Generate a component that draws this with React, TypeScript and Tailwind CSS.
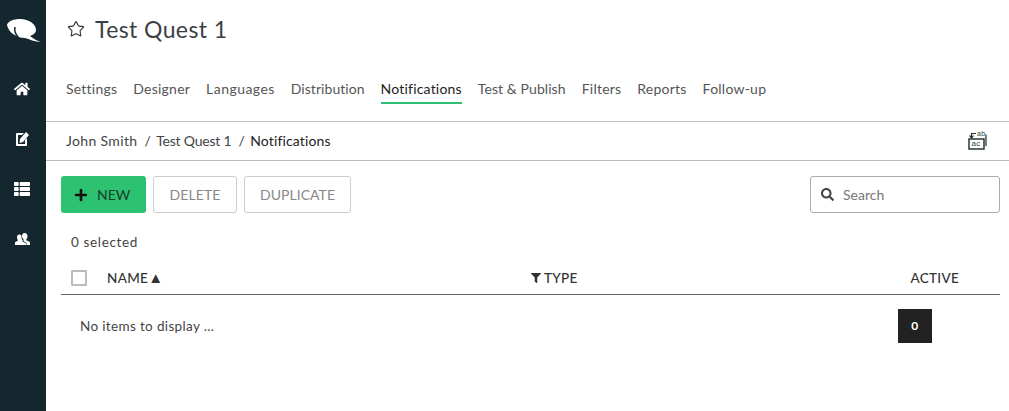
import { FaFilter, FaHome, FaPlus, FaSearch, FaThList } from 'react-icons/fa';
import { Star } from 'lucide-react';

const tabs = [
  { label: 'Settings', cls: '' },
  { label: 'Designer', cls: '' },
  { label: 'Languages', cls: 'tracking-[0.45px]' },
  { label: 'Distribution', cls: 'tracking-[0.05px]' },
  { label: 'Notifications', cls: 'h-[26px] border-b-2 border-[#2dbf73] tracking-[0.2px] text-[#222]' },
  { label: 'Test & Publish', cls: 'tracking-[0.08px]' },
  { label: 'Filters', cls: '' },
  { label: 'Reports', cls: '' },
  { label: 'Follow-up', cls: '' },
];

function Logo() {
  return (
    <svg width="38" height="27" viewBox="5 17 38 27" className="block">
      <path d="M7 25C8 21 14 19 20 19C29 19 36 24 36 30C36 33 33 35 30 36C33 38 37 41 41 42C35 42 29 39 25 38C20 38 17 37 15 35C12 34 8 30 7 25Z" fill="#fff" />
      <path d="M15 27C14 31 15 34 19 38" fill="none" stroke="#14262e" strokeWidth="1.500" />
    </svg>
  );
}

function EditIcon() {
  return (
    <svg width="14" height="16" viewBox="0 0 14 16" className="block">
      <path d="M2 2h7l-2 2H3v9h7V9l2-2v7a1 1 0 0 1-1 1H2a1 1 0 0 1-1-1V3a1 1 0 0 1 1-1z" fill="#fff" />
      <path d="M11 1l3 3-6 7-3.500 1L5 8z" fill="#fff" />
    </svg>
  );
}

function UsersIcon() {
  return (
    <svg width="15" height="14" viewBox="0 0 15 14" className="block">
      <path d="M9.500 1c2 0 3 1.500 3 3.300 0 1.200-.5 2.300-1.200 3v1l3.700 1.700V13h-3.500v-2L8.500 9V7.300C7.800 6.600 7 5.500 7 4.300 7 2.500 7.800 1 9.500 1z" fill="#fff" />
      <path d="M4.500 2.500c1.700 0 2 1 2 2.500 0 1.200 .3 2.300 1 3v1.500l3.500 1.700V13H0v-2.800l3-1.700V8c-.7-.7-1-1.800-1-3 0-1.500 .8-2.500 2.500-2.500z" fill="#fff" />
    </svg>
  );
}

function SwapIcon() {
  return (
    <svg width="22" height="22" viewBox="0 0 22 22" className="block">
      <text x="10" y="6.500" fontSize="7" fill="#2a3a44" fontFamily="Liberation Sans, sans-serif">ab</text>
      <text x="4.500" y="17" fontSize="8" fill="#2a3a44" fontFamily="Liberation Sans, sans-serif">ac</text>
      <rect x="2" y="10" width="15" height="10" fill="none" stroke="#1c2a22" strokeWidth="1.400" />
      <path d="M19 5.500V17M9 4.500H4.500V9M2.500 6.500l2 2.500 2-2.500" fill="none" stroke="#1c2a22" strokeWidth="1.200" />
    </svg>
  );
}

export default function App() {
  return (
    <div className="flex h-[411px] w-[1009px] overflow-hidden bg-white font-['Lato',sans-serif] text-[#333]">
      {/* Sidebar */}
      <aside className="flex w-[46px] shrink-0 flex-col items-center bg-[#14262e] text-white">
        <div className="mt-[17px] h-[27px] pl-[2px]"><Logo /></div>
        <nav className="mt-5 flex flex-col items-center pr-[2px]">
          <span className="flex h-[50px] items-center"><FaHome size={16} /></span>
          <span className="flex h-[50px] items-center"><EditIcon /></span>
          <span className="flex h-[50px] items-center"><FaThList size={16} /></span>
          <span className="flex h-[50px] items-center"><UsersIcon /></span>
        </nav>
      </aside>

      <main className="min-w-0 flex-1">
        {/* Title */}
        <div className="flex h-[60px] items-center pl-[21px]">
          <Star size={18} strokeWidth={1.500} className="mb-[2px] text-[#333]" />
          <h1 className="mb-[2px] ml-[10px] text-[23px] tracking-[0.4px] text-[#3a3f44]">Test Quest 1</h1>
        </div>

        {/* Tabs */}
        <div className="flex h-[62px] gap-4 border-b border-[#bbb] pl-5 pt-[18px] text-[14px] tracking-[0.23px] text-[#555]">
          {tabs.map((t) => (
            <span key={t.label} className={t.cls}>{t.label}</span>
          ))}
        </div>

        {/* Breadcrumb */}
        <div className="flex h-[39px] items-center justify-between border-b border-[#bbb] pl-5 pr-5 text-[14px] tracking-[0.35px]">
          <div className="mb-[2px] flex items-center text-[#444]">
            <span>John Smith</span>
            <span className="ml-[7px] mr-[5px]">/</span>
            <span className="tracking-[-0.2px]">Test Quest 1</span>
            <span className="ml-[7px] mr-[5px]">/</span>
            <span className="tracking-[0.15px] text-[#222]">Notifications</span>
          </div>
          <div className="mb-[3px]"><SwapIcon /></div>
        </div>

        {/* Toolbar */}
        <div className="flex items-center pl-[15px] pr-[9px] pt-[15px]">
          <button className="flex h-[37px] w-[85px] items-center gap-[9px] rounded-[3px] bg-[#2cc272] pl-[13px] text-[14px] text-[#14402a]">
            <FaPlus size={14} className="text-[#111]" />
            NEW
          </button>
          <button className="ml-[7px] h-[37px] w-[84px] rounded-[3px] border border-[#ccc] text-[14px] tracking-[0.1px] text-[#888]">DELETE</button>
          <button className="ml-[7px] h-[37px] w-[107px] rounded-[3px] border border-[#ccc] text-[14px] tracking-[0.05px] text-[#888]">DUPLICATE</button>
          <div className="ml-auto flex h-[37px] w-[190px] items-center rounded-[3px] border border-[#aaa] pl-[10px] text-[14px] text-[#777]">
            <FaSearch size={13} className="text-[#444]" />
            <span className="ml-[9px]">Search</span>
          </div>
        </div>

        <div className="pl-[25px] pt-[20px] text-[13.500px] leading-[18px] tracking-[0.65px] text-[#444]">0 selected</div>

        {/* Table */}
        <div className="mx-[15px] mr-[9px] mt-[12px]">
          <div className="flex h-[32px] items-center border-b border-[#666] pb-[1px] text-[13.500px] font-medium tracking-[0.3px] text-[#333]">
            <span className="ml-[10px] h-4 w-4 rounded-[1px] border-2 border-[#bbb]" />
            <span className="ml-5 flex w-[424px] items-center">NAME<span className="mb-[2px] text-[15px] leading-none">▲</span></span>
            <span className="flex items-center gap-[3px]"><FaFilter size={10} />TYPE</span>
            <span className="ml-auto mr-[41px]">ACTIVE</span>
          </div>
          <div className="flex h-[48px] items-center justify-between pl-[19px] pr-[68px] pt-[14px] text-[13.500px] tracking-[0.35px] text-[#444]">
            <span>No items to display ...</span>
            <span className="flex h-[34px] w-[34px] items-center justify-center bg-[#222] text-[12px] font-bold text-white">0</span>
          </div>
        </div>
      </main>
    </div>
  );
}
